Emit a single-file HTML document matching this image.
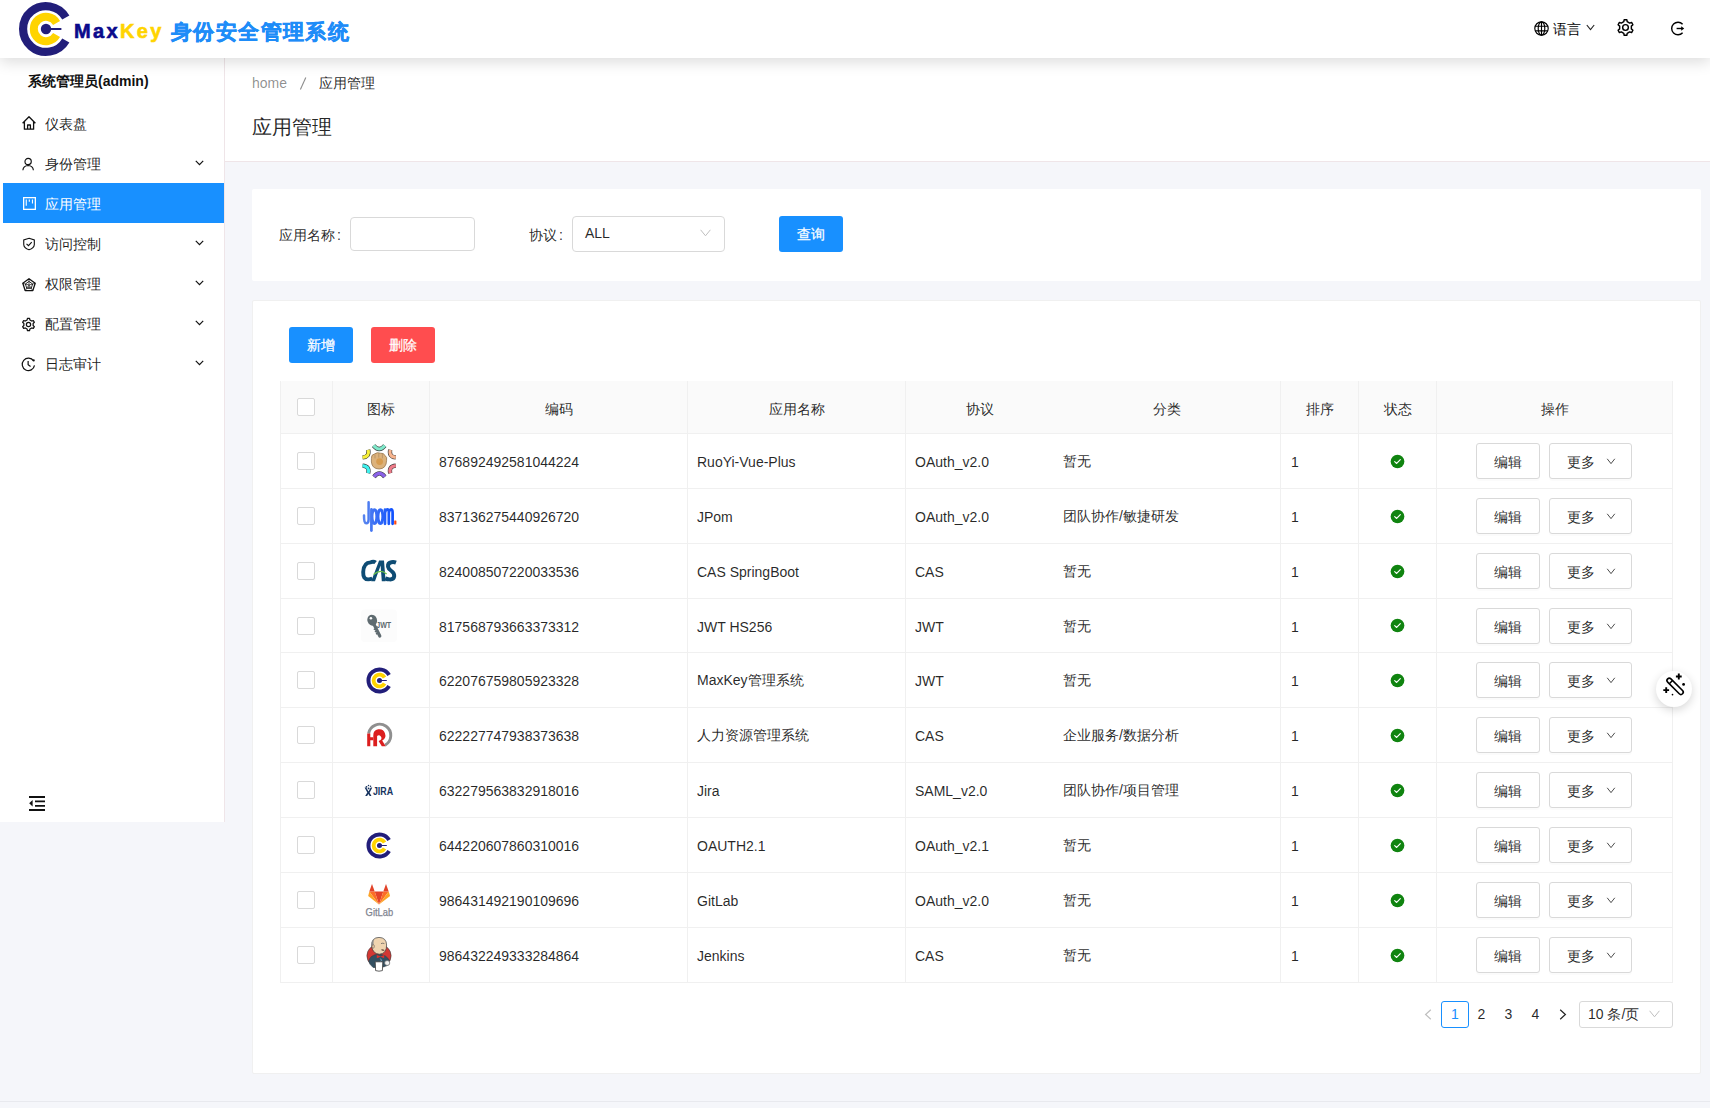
<!DOCTYPE html><html><head><meta charset="utf-8"><title>MaxKey</title><style>
*{box-sizing:border-box;margin:0;padding:0}
html,body{width:1710px;height:1108px;overflow:hidden}
body{background:#f5f6fa;font-family:"Liberation Sans",sans-serif;font-size:14px;color:rgba(0,0,0,.85);position:relative}
.abs{position:absolute}
#hdr{left:0;top:0;width:1710px;height:58px;background:#fff;box-shadow:0 4px 14px rgba(0,0,0,.14);z-index:5}
#side{left:0;top:58px;width:225px;height:764px;background:#fff;border-right:1px solid #efe5e8;z-index:2}
.mi{position:absolute;left:3px;width:221px;height:40px;line-height:40px;color:rgba(0,0,0,.88)}
.mi .ic{position:absolute;left:18px;top:13px;width:15px;height:15px}
.mi .tx{position:absolute;left:42px;top:1px;font-size:14px}
.mi .ch{position:absolute;left:192px;top:17px;width:9px;height:6px}
.mi.sel{background:#1890ff;color:#fff}
#ph{left:225px;top:58px;width:1485px;height:104px;background:#fff;border-bottom:1px solid #efe5e8}
.card{background:#fff;border-radius:2px}
.inp{border:1px solid #d9d9d9;border-radius:4px;background:#fff}
.btn{border-radius:3px;color:#fff;text-align:center;font-size:14px;-webkit-text-stroke:0.25px #fff}
.tbl{left:280px;top:381px;width:1393px;border-left:1px solid #f0f0f0}
.row{position:relative;height:55px;border-bottom:1px solid #f0f0f0;display:flex}
.row.h{height:53px;background:#fafafa;border-radius:2px 2px 0 0}
.c{position:relative;height:100%;border-right:1px solid #f0f0f0;display:flex;align-items:center;padding-left:9px;padding-top:2px;white-space:nowrap}
.row.h .c{justify-content:center;padding-left:0;padding-top:5px}
.row.h .c0{padding-top:0}
.row:not(.h) .c0,.row:not(.h) .c1,.row:not(.h) .c7,.row:not(.h) .c8{padding-top:0}
.c.nb{border-right:none}
.c0{width:52px;justify-content:center;padding-left:0}
.c1{width:97px;padding-left:28px}
.c2{width:258px}.c3{width:218px}.c4{width:147px}.c5{width:228px;padding-left:10px}.c6{width:78px;padding-left:10px}.c7{width:78px;justify-content:center;padding-left:0}
.c8{width:236px;justify-content:center;padding-left:0}
.cb{width:18px;height:18px;border:1px solid #d9d9d9;border-radius:2px;background:#fff;margin-right:1px}
.ob{position:absolute;top:9px;height:36px;border:1px solid #d9d9d9;border-radius:3px;background:#fff;box-shadow:0 2px 0 rgba(0,0,0,.016);line-height:36px;text-align:center;color:rgba(0,0,0,.85)}
.pg{position:absolute;top:1001px;height:27px;line-height:27px;text-align:center;color:rgba(0,0,0,.85)}
</style></head><body>
<div id="hdr" class="abs">
<div class="abs" style="left:18px;top:1px"><svg width="56" height="56" viewBox="0 0 56 56" ><path d="M47.83,16.55 A22.90,22.90 0 1 0 47.83,39.45" fill="none" stroke="#221e7a" stroke-width="8.2"/><path d="M38.57,21.90 A12.20,12.20 0 1 0 38.57,34.10" fill="none" stroke="#ffd400" stroke-width="8"/><circle cx="28" cy="28" r="5.2" fill="#221e7a"/><rect x="28" y="27" width="15.6" height="2.1" rx="1" fill="#221e7a"/></svg></div>
<div class="abs" style="left:74px;top:18px;font-size:20px;font-weight:bold;letter-spacing:2.35px;line-height:26px"><span style="color:#0a0a8c;-webkit-text-stroke:0.6px #0a0a8c">Max</span><span style="color:#ffd400;-webkit-text-stroke:0.6px #ffd400">Key</span></div>
<div class="abs" style="left:171px;top:17px;font-size:21px;font-weight:bold;color:#1e8cf8;letter-spacing:1.4px;line-height:30px;-webkit-text-stroke:0.45px #1e8cf8">身份安全管理系统</div>
<svg class="abs" style="left:1534px;top:21px" width="15" height="15" viewBox="0 0 15 15"><g fill="none" stroke="#000" stroke-width="1.15"><circle cx="7.5" cy="7.5" r="6.7"/><ellipse cx="7.5" cy="7.5" rx="3.3" ry="6.7"/><path d="M7.5,0.8 V14.2 M1.2,5.2 H13.8 M1.2,9.8 H13.8"/></g></svg>
<div class="abs" style="left:1553px;top:19px;font-size:14px;line-height:20px;color:#000">语言</div>
<svg class="abs" style="left:1586px;top:24px" width="9" height="7" viewBox="0 0 9 7"><path d="M0.8,1 L4.5,5.6 L8.2,1" fill="none" stroke="#222" stroke-width="1.1"/></svg>
<svg class="abs" style="left:1616px;top:18px" width="19" height="19" viewBox="0 0 24 24"><path d="M10.33,2.14 L13.67,2.14 L14.20,4.72 L17.20,6.46 L19.71,5.63 L21.37,8.51 L19.40,10.26 L19.40,13.74 L21.37,15.49 L19.71,18.37 L17.20,17.54 L14.20,19.28 L13.67,21.86 L10.33,21.86 L9.80,19.28 L6.80,17.54 L4.29,18.37 L2.63,15.49 L4.60,13.74 L4.60,10.26 L2.63,8.51 L4.29,5.63 L6.80,6.46 L9.80,4.72Z" fill="none" stroke="#000" stroke-width="1.8" stroke-linejoin="round"/><circle cx="12" cy="12" r="3.6" fill="none" stroke="#000" stroke-width="1.8"/></svg>
<svg class="abs" style="left:1670px;top:21px" width="16" height="16" viewBox="0 0 16 16"><path d="M12.6,3.2 A6.3,6.3 0 1 0 12.6,11.8" fill="none" stroke="#000" stroke-width="1.4"/><path d="M6.6,7.5 H12" stroke="#000" stroke-width="1.4"/><path d="M11.2,5.3 L14.2,7.5 L11.2,9.7 Z" fill="#000"/></svg>
</div>
<div id="side" class="abs">
<div class="abs" style="left:28px;top:14px;font-weight:bold;font-size:14px;line-height:18px;color:#111">系统管理员(admin)</div>
<div class="mi" style="top:45px"><svg class="ic" viewBox="0 0 16 16" style="left:18px;top:12px;width:16px;height:16px"><path d="M1.6,8.2 L8,1.8 L14.4,8.2 M3.4,6.6 V14.2 H12.6 V6.6 M6.6,14.2 V10 H9.4 V14.2" fill="none" stroke="#111" stroke-width="1.3" stroke-linejoin="round"/></svg><span class="tx">仪表盘</span></div>
<div class="mi" style="top:85px"><svg class="ic" viewBox="0 0 16 16" style="left:19px;top:13.5px;width:14px;height:15px"><circle cx="7" cy="4.6" r="3.6" fill="none" stroke="#111" stroke-width="1.3"/><path d="M1,14.6 Q1.4,9.4 7,9.2 Q12.6,9.4 13,14.6" fill="none" stroke="#111" stroke-width="1.3"/></svg><span class="tx">身份管理</span><svg class="ch" viewBox="0 0 9 6"><path d="M0.8,0.8 L4.5,4.6 L8.2,0.8" fill="none" stroke="#111" stroke-width="1.2"/></svg></div>
<div class="mi sel" style="top:125px"><svg class="ic" viewBox="0 0 14 14" style="left:19.5px;top:13.5px;width:13px;height:13px"><rect x="0.7" y="0.7" width="12.6" height="12.6" fill="none" stroke="#fff" stroke-width="1.4"/><path d="M3.5,2.8 V9.4 M6.8,2.8 V5.2 M10.2,2.8 V7" stroke="#fff" stroke-width="1.2"/></svg><span class="tx">应用管理</span></div>
<div class="mi" style="top:165px"><svg class="ic" viewBox="0 0 14 14" style="left:19.5px;top:14px;width:13px;height:14px"><path d="M6.5,0.8 L12.2,2.6 V7.6 Q12,11.6 6.5,13.2 Q1,11.6 0.8,7.6 V2.6 Z" fill="none" stroke="#111" stroke-width="1.2"/><path d="M3.8,6.8 L5.9,8.8 L9.4,5" fill="none" stroke="#111" stroke-width="1.2"/></svg><span class="tx">访问控制</span><svg class="ch" viewBox="0 0 9 6"><path d="M0.8,0.8 L4.5,4.6 L8.2,0.8" fill="none" stroke="#111" stroke-width="1.2"/></svg></div>
<div class="mi" style="top:205px"><svg class="ic" viewBox="0 0 14 14" style="left:19px;top:15px;width:14px;height:14px"><path d="M7,0.8 L13.2,5.3 L10.8,12.6 H3.2 L0.8,5.3 Z" fill="none" stroke="#111" stroke-width="1.3" stroke-linejoin="round"/><path d="M7,3.4 L10.6,6 L9.2,10.4 H4.8 L3.4,6 Z" fill="none" stroke="#111" stroke-width="0.9"/><path d="M7,0.8 V7 M13.2,5.3 L7,7 M10.8,12.6 L7,7 M3.2,12.6 L7,7 M0.8,5.3 L7,7" stroke="#111" stroke-width="0.7"/><path d="M4.8,10.4 L7,7.8 L9.2,10.4 Z" fill="#555"/></svg><span class="tx">权限管理</span><svg class="ch" viewBox="0 0 9 6"><path d="M0.8,0.8 L4.5,4.6 L8.2,0.8" fill="none" stroke="#111" stroke-width="1.2"/></svg></div>
<div class="mi" style="top:245px"><svg class="ic" viewBox="0 0 24 24" style="left:18px;top:14px;width:15px;height:15px"><path d="M10.33,2.14 L13.67,2.14 L14.20,4.72 L17.20,6.46 L19.71,5.63 L21.37,8.51 L19.40,10.26 L19.40,13.74 L21.37,15.49 L19.71,18.37 L17.20,17.54 L14.20,19.28 L13.67,21.86 L10.33,21.86 L9.80,19.28 L6.80,17.54 L4.29,18.37 L2.63,15.49 L4.60,13.74 L4.60,10.26 L2.63,8.51 L4.29,5.63 L6.80,6.46 L9.80,4.72Z" fill="none" stroke="#111" stroke-width="2" stroke-linejoin="round"/><circle cx="12" cy="12" r="3.4" fill="none" stroke="#111" stroke-width="2"/></svg><span class="tx">配置管理</span><svg class="ch" viewBox="0 0 9 6"><path d="M0.8,0.8 L4.5,4.6 L8.2,0.8" fill="none" stroke="#111" stroke-width="1.2"/></svg></div>
<div class="mi" style="top:285px"><svg class="ic" viewBox="0 0 16 16" style="left:18px;top:14px;width:15px;height:15px"><path d="M13.4,4.2 A6.6,6.6 0 1 0 14.4,9" fill="none" stroke="#111" stroke-width="1.3"/><path d="M7.6,4.2 V8.2 L10.2,10.2" fill="none" stroke="#111" stroke-width="1.3"/><circle cx="13.6" cy="3.6" r="1.1" fill="#111"/></svg><span class="tx">日志审计</span><svg class="ch" viewBox="0 0 9 6"><path d="M0.8,0.8 L4.5,4.6 L8.2,0.8" fill="none" stroke="#111" stroke-width="1.2"/></svg></div>
<svg class="abs" style="left:29px;top:738px" width="17" height="15" viewBox="0 0 17 15"><path d="M0,1 H16 M6,5.4 H16 M6,9.8 H16 M0,14 H16" stroke="#111" stroke-width="1.8"/><path d="M3.6,4 V10.4 L0.2,7.2 Z" fill="#111"/></svg>
</div>
<div id="ph" class="abs">
<div class="abs" style="left:27px;top:15px;line-height:20px;font-size:14px"><span style="color:rgba(0,0,0,.45)">home</span><svg style="position:absolute;left:47px;top:4px" width="8" height="13" viewBox="0 0 8 13"><path d="M6.8,0.6 L1.4,12.4" stroke="rgba(0,0,0,.45)" stroke-width="1.1"/></svg><span style="position:absolute;left:67px;top:0;color:rgba(0,0,0,.85);white-space:nowrap">应用管理</span></div>
<div class="abs" style="left:27px;top:55px;line-height:28px;font-size:20px;color:rgba(0,0,0,.85)">应用管理</div>
</div>
<div class="abs card" style="left:252px;top:189px;width:1449px;height:92px"></div>
<div class="abs" style="left:279px;top:225px;line-height:20px">应用名称<span style="margin-left:2px">:</span></div>
<div class="abs inp" style="left:350px;top:217px;width:125px;height:34px"></div>
<div class="abs" style="left:529px;top:225px;line-height:20px">协议<span style="margin-left:2px">:</span></div>
<div class="abs inp" style="left:572px;top:216px;width:153px;height:36px"></div>
<div class="abs" style="left:585px;top:223px;line-height:20px">ALL</div>
<svg class="abs" style="left:700px;top:229px" width="11" height="8" viewBox="0 0 11 8"><path d="M0.6,0.8 L5.5,6.8 L10.4,0.8" fill="none" stroke="#bfbfbf" stroke-width="1"/></svg>
<div class="abs btn" style="left:779px;top:216px;width:64px;height:36px;line-height:36px;background:#1890ff">查询</div>
<div class="abs card" style="left:252px;top:300px;width:1449px;height:774px;border:1px solid #f0f0f0"></div>
<div class="abs btn" style="left:289px;top:327px;width:64px;height:36px;line-height:36px;background:#1890ff">新增</div>
<div class="abs btn" style="left:371px;top:327px;width:64px;height:36px;line-height:36px;background:#ff4d4f">删除</div>
<div class="abs tbl">
<div class="row h"><div class="c c0"><div class="cb"></div></div><div class="c c1">图标</div><div class="c c2">编码</div><div class="c c3">应用名称</div><div class="c c4 nb">协议</div><div class="c c5">分类</div><div class="c c6">排序</div><div class="c c7">状态</div><div class="c c8">操作</div></div>
<div class="row"><div class="c c0"><div class="cb"></div></div><div class="c c1"><svg width="36" height="36" viewBox="0 0 36 36"><g fill="none" stroke-linecap="butt"><path d="M7.2,6.8 Q8.8,13.8 1.6,14.4" stroke="#3a3a3a" stroke-width="4.3"/><path d="M7.2,6.8 Q8.8,13.8 1.6,14.4" stroke="#f6ef3a" stroke-width="3.2"/><path d="M29.2,6.8 Q27.6,13.8 34.8,14.4" stroke="#3a3a3a" stroke-width="4.3"/><path d="M29.2,6.8 Q27.6,13.8 34.8,14.4" stroke="#f8b58f" stroke-width="3.2"/><path d="M7.2,30.2 Q8.8,23.2 1.6,22.6" stroke="#3a3a3a" stroke-width="4.3"/><path d="M7.2,30.2 Q8.8,23.2 1.6,22.6" stroke="#40f2ef" stroke-width="3.2"/><path d="M29.2,30.2 Q27.6,23.2 34.8,22.6" stroke="#3a3a3a" stroke-width="4.3"/><path d="M29.2,30.2 Q27.6,23.2 34.8,22.6" stroke="#ef7b89" stroke-width="3.2"/><path d="M12.6,2.6 Q18.2,9.4 23.8,2.6" stroke="#3a3a3a" stroke-width="4.3"/><path d="M12.6,2.6 Q18.2,9.4 23.8,2.6" stroke="#80e9cb" stroke-width="3.2"/><path d="M13,33.8 Q18.4,27 23.8,33.8" stroke="#3a3a3a" stroke-width="4.3"/><path d="M13,33.8 Q18.4,27 23.8,33.8" stroke="#8b62e8" stroke-width="3.2"/></g><path d="M10.4,15.6 Q10,11.6 13.4,11 Q16.2,8.8 19.6,10.2 Q23,9.8 24,12.6 Q26.4,14 25.6,17.4 Q25.4,25.6 18.2,26 Q11,25.8 10.4,19 Z" fill="#dcb27c" stroke="#8b6a44" stroke-width="0.7"/><path d="M14,11.6 V15.4 M17.8,10.4 V14.6 M21.4,11 V15.4" stroke="#a5825a" stroke-width="0.6"/><circle cx="18.6" cy="18.6" r="3.4" fill="#d79c50"/></svg></div><div class="c c2">876892492581044224</div><div class="c c3">RuoYi-Vue-Plus</div><div class="c c4 nb">OAuth_v2.0</div><div class="c c5">暂无</div><div class="c c6">1</div><div class="c c7"><svg width="15" height="15" viewBox="0 0 16 16"><circle cx="8" cy="8" r="7.3" fill="#108410"/><path d="M5,8.2 L7.1,10.1 L11,6" fill="none" stroke="#fff" stroke-width="1.25" stroke-linecap="round" stroke-linejoin="round"/></svg></div><div class="c c8"><div class="ob" style="left:39px;width:64px">编辑</div><div class="ob" style="left:112px;width:83px;text-align:left;padding-left:17px">更多<span style="position:absolute;left:56px;top:-2px"><svg width="10" height="7" viewBox="0 0 10 7"><path d="M1.2,0.8 L5,5.6 L8.8,0.8" fill="none" stroke="rgba(0,0,0,.7)" stroke-width="1"/></svg></span></div></div></div>
<div class="row"><div class="c c0"><div class="cb"></div></div><div class="c c1"><svg width="36" height="36" viewBox="0 0 36 36">
<defs><linearGradient id="jg" gradientUnits="userSpaceOnUse" x1="2" x2="34" y1="0" y2="0"><stop offset="0" stop-color="#5a86ee"/><stop offset="1" stop-color="#0a4dff"/></linearGradient></defs>
<g fill="none" stroke="url(#jg)" stroke-linecap="round">
<path d="M7.6,4.2 L7.6,21.4 Q7.6,25.2 5.2,25.2 Q3,25.2 3,17.6" stroke-width="2.5"/>
<path d="M10.4,11.4 L10.4,32.6" stroke-width="2.7"/>
<ellipse cx="13.4" cy="18.6" rx="2.4" ry="7" stroke-width="2.9"/>
<ellipse cx="19.4" cy="18.6" rx="2.4" ry="7" stroke-width="2.9"/>
<path d="M24,25.8 L24,11.6 M24,14.6 Q24.8,11.4 26.4,11.4 Q27.8,11.6 27.8,14.6 L27.8,25.8 M27.8,14.6 Q28.6,11.4 30.2,11.4 Q31.6,11.6 31.6,14.6 L31.6,25.8" stroke-width="2.7"/>
</g>
<rect x="33.2" y="22.4" width="2.2" height="4" rx="0.5" fill="#ff4a10"/>
</svg></div><div class="c c2">837136275440926720</div><div class="c c3">JPom</div><div class="c c4 nb">OAuth_v2.0</div><div class="c c5">团队协作/敏捷研发</div><div class="c c6">1</div><div class="c c7"><svg width="15" height="15" viewBox="0 0 16 16"><circle cx="8" cy="8" r="7.3" fill="#108410"/><path d="M5,8.2 L7.1,10.1 L11,6" fill="none" stroke="#fff" stroke-width="1.25" stroke-linecap="round" stroke-linejoin="round"/></svg></div><div class="c c8"><div class="ob" style="left:39px;width:64px">编辑</div><div class="ob" style="left:112px;width:83px;text-align:left;padding-left:17px">更多<span style="position:absolute;left:56px;top:-2px"><svg width="10" height="7" viewBox="0 0 10 7"><path d="M1.2,0.8 L5,5.6 L8.8,0.8" fill="none" stroke="rgba(0,0,0,.7)" stroke-width="1"/></svg></span></div></div></div>
<div class="row"><div class="c c0"><div class="cb"></div></div><div class="c c1"><svg width="36" height="36" viewBox="0 0 36 36">
<g fill="none" stroke="#0e4c74" stroke-width="3.9" stroke-linecap="butt">
<path d="M14.6,9.6 Q12.4,7.8 9.6,9.4 Q2.6,9.6 2.2,19 Q2,26.4 7.2,26.4 Q9.6,26.4 11.4,25.4"/>
<path d="M35,9.6 Q33,8.8 30.4,9.2 Q26.6,9.8 27,13.6 Q27.4,16 30.4,18 Q33.6,20.4 33.2,23.4 Q32.6,26.8 28.4,26.4 Q26.4,26.4 24.2,25.4"/>
</g>
<path d="M10.2,28.3 L18.1,7.4 L23,7.4 L24.6,28.3 L20.8,28.3 L19.6,12.4 L14,28.3 Z" fill="#0e4c74"/>
<path d="M12.6,21.6 Q19.6,15.4 25.6,21" stroke="#6cc24a" stroke-width="1.3" fill="none"/>
</svg></div><div class="c c2">824008507220033536</div><div class="c c3">CAS SpringBoot</div><div class="c c4 nb">CAS</div><div class="c c5">暂无</div><div class="c c6">1</div><div class="c c7"><svg width="15" height="15" viewBox="0 0 16 16"><circle cx="8" cy="8" r="7.3" fill="#108410"/><path d="M5,8.2 L7.1,10.1 L11,6" fill="none" stroke="#fff" stroke-width="1.25" stroke-linecap="round" stroke-linejoin="round"/></svg></div><div class="c c8"><div class="ob" style="left:39px;width:64px">编辑</div><div class="ob" style="left:112px;width:83px;text-align:left;padding-left:17px">更多<span style="position:absolute;left:56px;top:-2px"><svg width="10" height="7" viewBox="0 0 10 7"><path d="M1.2,0.8 L5,5.6 L8.8,0.8" fill="none" stroke="rgba(0,0,0,.7)" stroke-width="1"/></svg></span></div></div></div>
<div class="row" style="height:54px"><div class="c c0"><div class="cb"></div></div><div class="c c1"><svg width="36" height="36" viewBox="0 0 36 36">
<rect x="0" y="1.5" width="36" height="32.5" rx="4" fill="#fcfcfc"/>
<ellipse cx="11.2" cy="12.2" rx="4.8" ry="5.6" transform="rotate(-20 11.2 12.2)" fill="#5f6b70"/>
<circle cx="9.9" cy="10.2" r="1.3" fill="#fcfcfc"/>
<path d="M13,16.4 L18.8,28" stroke="#5f6b70" stroke-width="3.2" stroke-linecap="round"/>
<path d="M14.8,20.6 l-2,1 M15.9,22.8 l-2,1 M17,25 l-2,1" stroke="#5f6b70" stroke-width="1.5"/>
<text x="15.2" y="19.6" font-family="Liberation Sans" font-weight="bold" font-size="9.4" fill="#5f6b70" textLength="15" lengthAdjust="spacingAndGlyphs">JWT</text>
</svg></div><div class="c c2">817568793663373312</div><div class="c c3">JWT HS256</div><div class="c c4 nb">JWT</div><div class="c c5">暂无</div><div class="c c6">1</div><div class="c c7"><svg width="15" height="15" viewBox="0 0 16 16"><circle cx="8" cy="8" r="7.3" fill="#108410"/><path d="M5,8.2 L7.1,10.1 L11,6" fill="none" stroke="#fff" stroke-width="1.25" stroke-linecap="round" stroke-linejoin="round"/></svg></div><div class="c c8"><div class="ob" style="left:39px;width:64px">编辑</div><div class="ob" style="left:112px;width:83px;text-align:left;padding-left:17px">更多<span style="position:absolute;left:56px;top:-2px"><svg width="10" height="7" viewBox="0 0 10 7"><path d="M1.2,0.8 L5,5.6 L8.8,0.8" fill="none" stroke="rgba(0,0,0,.7)" stroke-width="1"/></svg></span></div></div></div>
<div class="row"><div class="c c0"><div class="cb"></div></div><div class="c c1"><svg width="27" height="27" viewBox="0 0 56 56" style="margin:0 4.5px"><path d="M47.83,16.55 A22.90,22.90 0 1 0 47.83,39.45" fill="none" stroke="#221e7a" stroke-width="8.2"/><path d="M38.57,21.90 A12.20,12.20 0 1 0 38.57,34.10" fill="none" stroke="#ffd400" stroke-width="8"/><circle cx="28" cy="28" r="5.2" fill="#221e7a"/><rect x="28" y="27" width="15.6" height="2.1" rx="1" fill="#221e7a"/></svg></div><div class="c c2">622076759805923328</div><div class="c c3">MaxKey管理系统</div><div class="c c4 nb">JWT</div><div class="c c5">暂无</div><div class="c c6">1</div><div class="c c7"><svg width="15" height="15" viewBox="0 0 16 16"><circle cx="8" cy="8" r="7.3" fill="#108410"/><path d="M5,8.2 L7.1,10.1 L11,6" fill="none" stroke="#fff" stroke-width="1.25" stroke-linecap="round" stroke-linejoin="round"/></svg></div><div class="c c8"><div class="ob" style="left:39px;width:64px">编辑</div><div class="ob" style="left:112px;width:83px;text-align:left;padding-left:17px">更多<span style="position:absolute;left:56px;top:-2px"><svg width="10" height="7" viewBox="0 0 10 7"><path d="M1.2,0.8 L5,5.6 L8.8,0.8" fill="none" stroke="rgba(0,0,0,.7)" stroke-width="1"/></svg></span></div></div></div>
<div class="row"><div class="c c0"><div class="cb"></div></div><div class="c c1"><svg width="36" height="36" viewBox="0 0 36 36"><g transform="translate(0.8,0.9)">
<path d="M6.77,15.56 A11.2,11.2 0 1 1 23.23,27.3" fill="none" stroke="#8f8f8f" stroke-width="2.9"/>
<path d="M5.4,15.5 H8.5 V19.3 H11.5 V15.5 H11.5 V28.3 H11.5 V22.3 H8.5 V28.3 H5.4 Z" fill="#dc1e1e"/>
<path d="M11.5,28.3 V17.5 A6,6 0 1 1 20.4,22.6 L23.8,28.3 H20 L16.8,23.2 L18.4,22.4 A2.6,2.6 0 1 0 15.3,18 V28.3 Z" fill="#dc1e1e"/>
</g></svg></div><div class="c c2">622227747938373638</div><div class="c c3">人力资源管理系统</div><div class="c c4 nb">CAS</div><div class="c c5">企业服务/数据分析</div><div class="c c6">1</div><div class="c c7"><svg width="15" height="15" viewBox="0 0 16 16"><circle cx="8" cy="8" r="7.3" fill="#108410"/><path d="M5,8.2 L7.1,10.1 L11,6" fill="none" stroke="#fff" stroke-width="1.25" stroke-linecap="round" stroke-linejoin="round"/></svg></div><div class="c c8"><div class="ob" style="left:39px;width:64px">编辑</div><div class="ob" style="left:112px;width:83px;text-align:left;padding-left:17px">更多<span style="position:absolute;left:56px;top:-2px"><svg width="10" height="7" viewBox="0 0 10 7"><path d="M1.2,0.8 L5,5.6 L8.8,0.8" fill="none" stroke="rgba(0,0,0,.7)" stroke-width="1"/></svg></span></div></div></div>
<div class="row"><div class="c c0"><div class="cb"></div></div><div class="c c1"><svg width="36" height="36" viewBox="0 0 36 36"><g transform="translate(0.3,1.2)">
<g fill="#17335f">
<circle cx="5.2" cy="13.6" r="0.9"/><circle cx="7.2" cy="12.2" r="0.75"/><circle cx="9.2" cy="13" r="0.75"/><circle cx="7.3" cy="15.2" r="0.9"/>
<path d="M3.3,14.4 L4.9,14.4 L7.2,18.4 L9.4,14.4 L11,14.4 L8.3,19.6 L10.2,22.9 L8.4,22.9 L7.1,20.8 L5.8,22.9 L3.9,22.9 L6,19.4 Z"/>
</g>
<text x="11.6" y="21.5" font-family="Liberation Sans" font-weight="bold" font-size="11.3" fill="#17335f" textLength="20.2" lengthAdjust="spacingAndGlyphs">JIRA</text>
</g></svg></div><div class="c c2">632279563832918016</div><div class="c c3">Jira</div><div class="c c4 nb">SAML_v2.0</div><div class="c c5">团队协作/项目管理</div><div class="c c6">1</div><div class="c c7"><svg width="15" height="15" viewBox="0 0 16 16"><circle cx="8" cy="8" r="7.3" fill="#108410"/><path d="M5,8.2 L7.1,10.1 L11,6" fill="none" stroke="#fff" stroke-width="1.25" stroke-linecap="round" stroke-linejoin="round"/></svg></div><div class="c c8"><div class="ob" style="left:39px;width:64px">编辑</div><div class="ob" style="left:112px;width:83px;text-align:left;padding-left:17px">更多<span style="position:absolute;left:56px;top:-2px"><svg width="10" height="7" viewBox="0 0 10 7"><path d="M1.2,0.8 L5,5.6 L8.8,0.8" fill="none" stroke="rgba(0,0,0,.7)" stroke-width="1"/></svg></span></div></div></div>
<div class="row"><div class="c c0"><div class="cb"></div></div><div class="c c1"><svg width="27" height="27" viewBox="0 0 56 56" style="margin:0 4.5px"><path d="M47.83,16.55 A22.90,22.90 0 1 0 47.83,39.45" fill="none" stroke="#221e7a" stroke-width="8.2"/><path d="M38.57,21.90 A12.20,12.20 0 1 0 38.57,34.10" fill="none" stroke="#ffd400" stroke-width="8"/><circle cx="28" cy="28" r="5.2" fill="#221e7a"/><rect x="28" y="27" width="15.6" height="2.1" rx="1" fill="#221e7a"/></svg></div><div class="c c2">644220607860310016</div><div class="c c3">OAUTH2.1</div><div class="c c4 nb">OAuth_v2.1</div><div class="c c5">暂无</div><div class="c c6">1</div><div class="c c7"><svg width="15" height="15" viewBox="0 0 16 16"><circle cx="8" cy="8" r="7.3" fill="#108410"/><path d="M5,8.2 L7.1,10.1 L11,6" fill="none" stroke="#fff" stroke-width="1.25" stroke-linecap="round" stroke-linejoin="round"/></svg></div><div class="c c8"><div class="ob" style="left:39px;width:64px">编辑</div><div class="ob" style="left:112px;width:83px;text-align:left;padding-left:17px">更多<span style="position:absolute;left:56px;top:-2px"><svg width="10" height="7" viewBox="0 0 10 7"><path d="M1.2,0.8 L5,5.6 L8.8,0.8" fill="none" stroke="rgba(0,0,0,.7)" stroke-width="1"/></svg></span></div></div></div>
<div class="row"><div class="c c0"><div class="cb"></div></div><div class="c c1"><svg width="36" height="36" viewBox="0 0 36 36">
<path d="M18,22.5 L13.7,9.4 L22.3,9.4 Z" fill="#e24329"/>
<path d="M18,22.5 L13.7,9.4 L8.3,9.4 Z" fill="#fc6d26"/>
<path d="M8.3,9.4 L7.2,13.9 L18,22.5 Z" fill="#fca326"/>
<path d="M8.3,9.4 L11,1.9 L13.7,9.4 Z" fill="#e24329"/>
<path d="M18,22.5 L22.3,9.4 L27.7,9.4 Z" fill="#fc6d26"/>
<path d="M27.7,9.4 L29.1,13.9 L18,22.5 Z" fill="#fca326"/>
<path d="M27.7,9.4 L25,1.9 L22.3,9.4 Z" fill="#e24329"/>
<text x="4.6" y="34.2" font-family="Liberation Sans" font-size="10.8" fill="#7f8490" stroke="#7f8490" stroke-width="0.25" textLength="27.6" lengthAdjust="spacingAndGlyphs">GitLab</text>
</svg></div><div class="c c2">986431492190109696</div><div class="c c3">GitLab</div><div class="c c4 nb">OAuth_v2.0</div><div class="c c5">暂无</div><div class="c c6">1</div><div class="c c7"><svg width="15" height="15" viewBox="0 0 16 16"><circle cx="8" cy="8" r="7.3" fill="#108410"/><path d="M5,8.2 L7.1,10.1 L11,6" fill="none" stroke="#fff" stroke-width="1.25" stroke-linecap="round" stroke-linejoin="round"/></svg></div><div class="c c8"><div class="ob" style="left:39px;width:64px">编辑</div><div class="ob" style="left:112px;width:83px;text-align:left;padding-left:17px">更多<span style="position:absolute;left:56px;top:-2px"><svg width="10" height="7" viewBox="0 0 10 7"><path d="M1.2,0.8 L5,5.6 L8.8,0.8" fill="none" stroke="rgba(0,0,0,.7)" stroke-width="1"/></svg></span></div></div></div>
<div class="row"><div class="c c0"><div class="cb"></div></div><div class="c c1"><svg width="36" height="36" viewBox="0 0 36 36">
<ellipse cx="18" cy="18.8" rx="12.1" ry="11.5" fill="#d33833" stroke="#3a3a3a" stroke-width="0.6"/>
<path d="M7.6,24 Q9.4,17.6 17.4,17.2 Q25.6,17.4 28.4,23.6 L28,27.6 Q22,31.6 12,30.4 Q8.4,27.6 7.6,24 Z" fill="#335061" stroke="#2a3a45" stroke-width="0.5"/>
<path d="M10.6,8.6 Q10.4,0.6 18,0.4 Q25.4,0.6 25.6,8 Q25.8,16.6 18.4,17.2 Q11.4,16.8 10.6,8.6 Z" fill="#efd4b0" stroke="#3e3e3e" stroke-width="0.7"/>
<path d="M10.7,9.6 Q10,4 12.8,2.2 Q12,6 13,10.4 Q12.2,11.6 10.7,9.6 Z" fill="#8a8a8a"/>
<ellipse cx="12.2" cy="9.4" rx="1.2" ry="1.8" fill="#e9c59c" stroke="#555" stroke-width="0.5"/>
<path d="M19.8,12.8 Q21.6,11.6 23.6,13.2 Q22,14.8 19.8,12.8 Z" fill="#6a5040"/>
<path d="M20,6.6 Q21.8,5.8 23.4,6.6" stroke="#555" stroke-width="0.7" fill="none"/>
<path d="M15.8,18 L19.6,19.6 L23.2,18 L23.2,21.2 L19.6,19.8 L15.8,21.2 Z" fill="#e0302a"/>
<path d="M19.4,21.6 L20.6,23.4 L19.2,24.6" stroke="#7fb3d6" stroke-width="0.9" fill="none"/>
<path d="M14.2,24.8 H21.8 L21.4,33.6 Q18,34.8 14.6,33.6 Z" fill="#fff" stroke="#3a3a3a" stroke-width="0.8"/>
<ellipse cx="26.2" cy="26" rx="2.6" ry="2.4" fill="#f4f4f4" stroke="#555" stroke-width="0.6"/>
</svg></div><div class="c c2">986432249333284864</div><div class="c c3">Jenkins</div><div class="c c4 nb">CAS</div><div class="c c5">暂无</div><div class="c c6">1</div><div class="c c7"><svg width="15" height="15" viewBox="0 0 16 16"><circle cx="8" cy="8" r="7.3" fill="#108410"/><path d="M5,8.2 L7.1,10.1 L11,6" fill="none" stroke="#fff" stroke-width="1.25" stroke-linecap="round" stroke-linejoin="round"/></svg></div><div class="c c8"><div class="ob" style="left:39px;width:64px">编辑</div><div class="ob" style="left:112px;width:83px;text-align:left;padding-left:17px">更多<span style="position:absolute;left:56px;top:-2px"><svg width="10" height="7" viewBox="0 0 10 7"><path d="M1.2,0.8 L5,5.6 L8.8,0.8" fill="none" stroke="rgba(0,0,0,.7)" stroke-width="1"/></svg></span></div></div></div>
</div>
<svg class="abs" style="left:1424px;top:1009px" width="8" height="11" viewBox="0 0 8 11"><path d="M6.8,0.8 L1.6,5.5 L6.8,10.2" fill="none" stroke="#bfbfbf" stroke-width="1.2"/></svg>
<div class="pg" style="left:1441px;width:28px;border:1px solid #1890ff;border-radius:3px;color:#1890ff;line-height:25px">1</div>
<div class="pg" style="left:1468px;width:27px">2</div>
<div class="pg" style="left:1495px;width:27px">3</div>
<div class="pg" style="left:1522px;width:27px">4</div>
<svg class="abs" style="left:1559px;top:1009px" width="8" height="11" viewBox="0 0 8 11"><path d="M1.2,0.8 L6.4,5.5 L1.2,10.2" fill="none" stroke="#222" stroke-width="1.2"/></svg>
<div class="abs inp" style="left:1579px;top:1001px;width:94px;height:27px;border-radius:3px"></div>
<div class="abs" style="left:1588px;top:1004px;line-height:20px">10 条/页</div>
<svg class="abs" style="left:1649px;top:1010px" width="11" height="8" viewBox="0 0 11 8"><path d="M0.6,0.8 L5.5,6.8 L10.4,0.8" fill="none" stroke="#bfbfbf" stroke-width="1"/></svg>
<div class="abs" style="left:1656px;top:671px;width:36px;height:36px;border-radius:50%;background:#fff;box-shadow:0 3px 10px rgba(0,0,0,.16);z-index:6"><svg style="position:absolute;left:0;top:0" width="36" height="36" viewBox="0 0 36 36"><g transform="rotate(45 19.1 15.35)"><rect x="8.6" y="13.05" width="21" height="4.6" rx="2.3" fill="none" stroke="#000" stroke-width="1.6"/><path d="M13.2,13.1 V17.6" stroke="#000" stroke-width="1.5"/></g><path d="M22.8,2.6 V8.4 M19.9,5.5 H25.7" stroke="#000" stroke-width="1.9"/><path d="M10.2,16.2 V22 M7.3,19.1 H13.1" stroke="#000" stroke-width="1.9"/><circle cx="27.6" cy="13.4" r="1.4" fill="#000"/><circle cx="16.5" cy="23.6" r="0.85" fill="#000"/></svg></div>
<div class="abs" style="left:0;top:1101px;width:1710px;height:1px;background:#e8e9ee"></div>
</body></html>
